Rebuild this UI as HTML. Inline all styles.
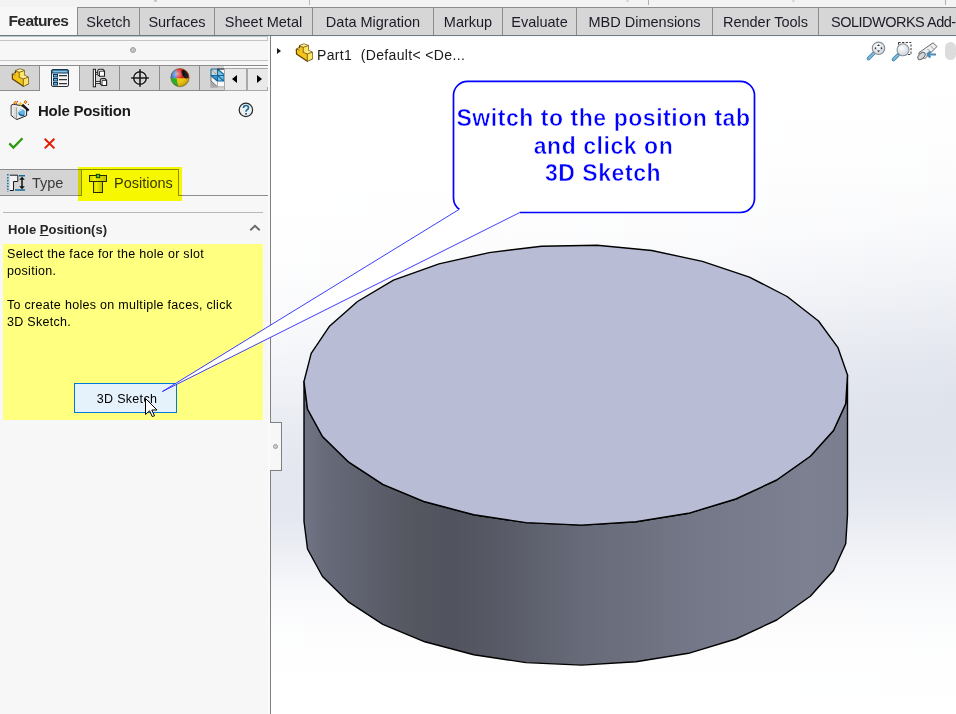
<!DOCTYPE html>
<html><head><meta charset="utf-8">
<style>
*{margin:0;padding:0;box-sizing:border-box}
html,body{width:956px;height:714px;overflow:hidden}
body{position:relative;background:#f7f7f7;font-family:"Liberation Sans",sans-serif;color:#1a1a1a}
.a{position:absolute}
.tab{position:absolute;top:7px;height:29px;background:#d6d6d6;border:1px solid #8c8c8c;border-bottom:none;font-size:14.5px;color:#1c1c28;display:flex;align-items:center;justify-content:center;padding-bottom:1px;white-space:nowrap;overflow:hidden}
.itab{position:absolute;top:65px;height:26px;background:#d4d4d4;border:1px solid #8c8c8c;border-left:none}
</style></head><body>
<!-- top strip -->
<div class="a" style="left:0;top:0;width:956px;height:7px;background:#f3f3f3"></div>
<div class="a" style="left:309px;top:0;width:1px;height:5px;background:#b8b8b8"></div>
<div class="a" style="left:648px;top:0;width:1px;height:5px;background:#b0b0b0"></div>
<div class="a" style="left:945px;top:0;width:1px;height:5px;background:#b0b0b0"></div>
<div class="a" style="left:154px;top:0;width:3px;height:2px;border-radius:0 0 2px 2px;background:#c4c4c4"></div>
<div class="a" style="left:626px;top:0;width:3px;height:2px;border-radius:0 0 2px 2px;background:#d8d8d8"></div>
<div class="a" style="left:792px;top:0;width:3px;height:2px;border-radius:0 0 2px 2px;background:#d8d8d8"></div>

<!-- command manager tabs -->
<div class="a" style="left:0;top:7px;width:77px;height:29px;background:#f7f7f7;font-weight:bold;font-size:15.5px;letter-spacing:-0.6px;color:#2a2a2a;display:flex;align-items:center;padding-left:8.5px;padding-bottom:2px">Features</div>
<div class="tab" style="left:77px;width:63px">Sketch</div>
<div class="tab" style="left:139px;width:76px">Surfaces</div>
<div class="tab" style="left:214px;width:99px">Sheet Metal</div>
<div class="tab" style="left:312px;width:122px">Data Migration</div>
<div class="tab" style="left:433px;width:70px">Markup</div>
<div class="tab" style="left:502px;width:75px">Evaluate</div>
<div class="tab" style="left:576px;width:137px">MBD Dimensions</div>
<div class="tab" style="left:712px;width:107px">Render Tools</div>
<div class="tab" style="left:818px;width:160px;justify-content:flex-start;padding-left:12px;letter-spacing:-0.5px">SOLIDWORKS Add-ins</div>
<div class="a" style="left:77px;top:35px;width:879px;height:1px;background:#6f7a80"></div>
<div class="a" style="left:0;top:35px;width:77px;height:1px;background:#6f7a80"></div>
<div class="a" style="left:0;top:36px;width:268px;height:1px;background:#b6c8cc"></div>

<!-- left panel -->
<div class="a" style="left:0;top:40px;width:268px;height:1px;background:#c4c4c4"></div><div class="a" style="left:267px;top:37px;width:1px;height:4px;background:#c4c4c4"></div><div class="a" style="left:268px;top:36px;width:2px;height:678px;background:#fafafa"></div>
<div class="a" style="left:130px;top:47px;width:6px;height:6px;border-radius:50%;background:#c4c4c4;border:1px solid #a0a0a0"></div>
<div class="a" style="left:0;top:60px;width:268px;height:1px;background:#c4c4c4"></div>

<!-- icon tabs -->
<div class="a" style="left:0;top:65px;width:268px;height:1px;background:#8c8c8c"></div>
<div class="itab" style="left:0;width:40px"></div>
<div class="itab" style="left:40px;width:40px;background:#f7f7f7;border-bottom:none"></div>
<div class="itab" style="left:80px;width:40px"></div>
<div class="itab" style="left:120px;width:40px"></div>
<div class="itab" style="left:160px;width:40px"></div>
<div class="itab" style="left:200px;width:24px;border-right:none"></div>
<div class="a" style="left:224px;top:68px;width:44px;height:1px;background:#a8a8a8"></div><div class="a" style="left:224px;top:69px;width:23px;height:22px;background:#e9e9e9;border-left:1px solid #a8a8a8;border-bottom:1px solid #a8a8a8"></div>
<div class="a" style="left:246px;top:69px;width:2px;height:22px;background:#a8a8a8"></div><div class="a" style="left:248px;top:69px;width:20px;height:22px;background:#e9e9e9;border-bottom:1px solid #a8a8a8"></div><div class="a" style="left:267px;top:87px;width:1px;height:3px;background:#a8a8a8"></div>

<!-- title -->
<div class="a" style="left:38px;top:101.5px;font-weight:bold;font-size:15px;letter-spacing:-0.25px;color:#1a1a1a">Hole Position</div>

<!-- type/positions -->
<div class="a" style="left:0;top:169px;width:82px;height:27px;background:#d4d4d4;border-top:1px solid #8c8c8c;border-right:1px solid #8c8c8c;border-bottom:1px solid #8c8c8c"></div>
<div class="a" style="left:81px;top:169px;width:98px;height:27px;background:#f7f7f7;border:1px solid #8c8c8c;border-bottom:none"></div>
<div class="a" style="left:178px;top:195px;width:90px;height:1px;background:#8c8c8c"></div>
<div class="a" style="left:32px;top:174.5px;font-size:14.5px;color:#3a3a3a">Type</div>
<div class="a" style="left:114px;top:174.5px;font-size:14.5px;color:#383838">Positions</div>

<div class="a" style="left:3px;top:212px;width:260px;height:1px;background:#b8b8b8"></div>
<div class="a" style="left:8px;top:222px;font-weight:bold;font-size:13px;color:#262626">Hole <u>P</u>osition(s)</div>

<svg class="a" style="left:248px;top:223px" width="14" height="10" viewBox="0 0 14 10"><path d="M2.3,7.3 L7,2.8 L11.7,7.3" fill="none" stroke="#686868" stroke-width="1.9"/></svg>
<!-- message box -->
<div class="a" style="left:3px;top:244px;width:260px;height:176px;background:#ffff80"></div>
<div class="a" style="left:7px;top:246px;font-size:12.5px;line-height:17px;letter-spacing:0.3px;color:#000">Select the face for the hole or slot<br>position.<br><br>To create holes on multiple faces, click<br>3D Sketch.</div>
<div class="a" style="left:74px;top:383px;width:103px;height:30px;background:#e5f1fb;border:1px solid #0078d7;font-size:12.5px;letter-spacing:0.3px;display:flex;align-items:center;justify-content:center;padding-top:2px;padding-left:3px;color:#000">3D Sketch</div>


<svg width="0" height="0" style="position:absolute">
<defs>
<symbol id="part" viewBox="0 0 22 22">
<path d="M2.3,8.2 L5.5,6.6 L5.5,4.9 L9.9,3.1 L14.2,4.6 L14.5,9.6 L18.2,11.2 L18.5,17.6 L13.3,20.3 L2.5,12.9 Z" fill="#f4c418" stroke="#5a3e00" stroke-width="1.2" stroke-linejoin="round"/>
<path d="M9.2,6.3 L14.2,4.6 L14.5,9.6 L9.2,11.4 Z M13.3,12.9 L18.2,11.2 L18.5,17.6 L13.3,20.3 Z" fill="#fce566"/>
<path d="M5.5,4.9 L9.9,3.1 L14.2,4.6 L9.2,6.3 Z M9.2,11.4 L14.5,9.6 L18.2,11.2 L13.3,12.9 Z" fill="#fdee9a"/>
<path d="M2.3,8.2 L4.3,7.3 L5.5,7.8 L5.5,9.0 Z" fill="#fdee9a"/>
<path d="M2.3,8.2 L5.5,9.0 M5.5,4.9 L9.2,6.3 L9.2,11.4 L13.3,12.9 L13.3,20.3 M9.2,6.3 L14.2,4.6 M13.3,12.9 L18.2,11.2" fill="none" stroke="#6e4e00" stroke-width="0.8"/>
</symbol>
</defs>
</svg>
<!-- icon tab icons -->
<svg class="a" style="left:10px;top:66px" width="22" height="22" viewBox="0 0 22 22"><use href="#part"/></svg>
<svg class="a" style="left:48px;top:66px" width="24" height="24" viewBox="0 0 24 24">
<rect x="3.5" y="3.5" width="17" height="17" rx="1.5" fill="#f4f4f4" stroke="#25303a" stroke-width="1"/>
<path d="M4,7 L4,5 Q4,4 5,4 L19,4 Q20,4 20,5 L20,7 Z" fill="#7cc2e6" stroke="#0b3a5e" stroke-width="1"/>
<rect x="5.5" y="8.5" width="4" height="2.5" fill="#6fb2d8" stroke="#0b3a5e" stroke-width="1"/>
<rect x="5.5" y="12.5" width="4" height="2.5" fill="#6fb2d8" stroke="#0b3a5e" stroke-width="1"/>
<rect x="5.5" y="16.5" width="4" height="2.5" fill="#6fb2d8" stroke="#0b3a5e" stroke-width="1"/>
<path d="M11,9.6 H19 M11,13.6 H19 M11,17.6 H19" stroke="#333" stroke-width="1.1"/>
</svg>
<svg class="a" style="left:88px;top:66px" width="24" height="24" viewBox="0 0 24 24">
<rect x="5.3" y="3.3" width="2.2" height="17.5" fill="#fff" stroke="#1e1e1e" stroke-width="1"/>
<rect x="7.5" y="6.4" width="3.5" height="1.8" fill="#fff" stroke="#1e1e1e" stroke-width="0.9"/>
<rect x="7.5" y="15.6" width="5" height="1.8" fill="#fff" stroke="#1e1e1e" stroke-width="0.9"/>
<path d="M9.8,4.8 Q10,3.3 11.5,3.3 L14.8,3.3 L16.5,5 L16.5,10.3 L11.5,10.3 L9.8,8.8 Z" fill="#fff" stroke="#1e1e1e" stroke-width="1.1"/>
<path d="M11.5,5.2 H16.3 M11.5,5.2 V10.2" stroke="#1e1e1e" stroke-width="0.9" fill="none"/>
<path d="M12.3,14.2 Q12.5,12.6 14,12.6 L17,12.6 L18.6,14.2 L18.6,19.5 L14,19.5 L12.3,18 Z" fill="#fff" stroke="#1e1e1e" stroke-width="1.1"/>
<path d="M14,14.4 H18.4 M14,14.4 V19.4" stroke="#1e1e1e" stroke-width="0.9" fill="none"/>
</svg>
<svg class="a" style="left:128px;top:66px" width="24" height="24" viewBox="0 0 24 24">
<circle cx="12" cy="12" r="6.3" fill="none" stroke="#fff" stroke-width="3" opacity="0.6"/>
<circle cx="12" cy="12" r="6.3" fill="none" stroke="#1a1a1a" stroke-width="1.5"/>
<path d="M12,3.2 V20.8 M3.2,12 H20.8" stroke="#1a1a1a" stroke-width="1.6"/>
</svg>
<svg class="a" style="left:168px;top:66px" width="24" height="24" viewBox="0 0 24 24">
<defs><radialGradient id="hl" cx="0.35" cy="0.3" r="0.75"><stop offset="0" stop-color="#fff" stop-opacity="0.6"/><stop offset="0.45" stop-color="#fff" stop-opacity="0"/><stop offset="1" stop-color="#000" stop-opacity="0.3"/></radialGradient><clipPath id="bc"><circle cx="12" cy="11.6" r="9.2"/></clipPath></defs>
<g clip-path="url(#bc)">
<rect x="0" y="0" width="24" height="24" fill="#f0c400"/>
<path d="M0,0 H24 V12.2 H0 Z" fill="#d81c1c"/>
<path d="M0,0 H9.5 Q8,6 8.6,12.2 H0 Z" fill="#3a78d6"/>
<path d="M0,12.2 H8.6 Q9.3,17 11,24 H0 Z" fill="#1fae22"/>
<ellipse cx="16.8" cy="8.2" rx="2.6" ry="4.8" transform="rotate(-32 16.8 8.2)" fill="#0e0e0e"/>
</g>
<circle cx="12" cy="11.6" r="9.2" fill="url(#hl)" stroke="#6a5020" stroke-width="0.5"/>
</svg>
<svg class="a" style="left:206px;top:64px" width="18" height="28" viewBox="0 0 18 28">
<rect x="4.3" y="4" width="13.7" height="19.7" fill="#dcdcdc"/>
<path d="M4.3,16 L11.5,23.7 L4.3,23.7 Z" fill="#a9a9a9"/>
<path d="M5,11.5 L11.5,17.5 L11.5,22.8 L5,17 Z" fill="#f4f4f4" stroke="#3a3a3a" stroke-width="0.7"/>
<rect x="11.5" y="17" width="6.5" height="5.8" fill="#fafafa"/>
<path d="M11.5,22.8 H18" stroke="#9a9a9a" stroke-width="0.8"/>
<rect x="5" y="5" width="6.5" height="6.5" fill="#d6d0c8"/>
<path d="M11.5,5 L18,5 L18,17 L11.5,17 Z" fill="#7cc0e0"/>
<path d="M5,11.5 L11.5,11.5 L11.5,17 Z" fill="#4a9ac4"/>
<path d="M11.5,5 L18,10.5 L18,5 Z" fill="#f6f6f6"/>
<path d="M5,5 H11.5 V17 H18 V10.5 L11.5,5 M5,5 V11.5 H18 M5,11.5 L11.5,17 M11.5,11.5 L18,17" fill="none" stroke="#0d6aa0" stroke-width="1.1"/>
<path d="M6.5,6.5 L10,10" stroke="#1a7ab0" stroke-width="0.8" stroke-dasharray="1 0.8"/>
<path d="M11.5,5 H18" stroke="#111" stroke-width="1.1"/>
</svg>
<div class="a" style="left:232px;top:75px;width:0;height:0;border-top:4px solid transparent;border-bottom:4px solid transparent;border-right:5px solid #000"></div>
<div class="a" style="left:257px;top:75px;width:0;height:0;border-top:4px solid transparent;border-bottom:4px solid transparent;border-left:5px solid #000"></div>

<!-- hole position icon -->
<svg class="a" style="left:6px;top:98px" width="28" height="24" viewBox="0 0 28 24">
<path d="M5.2,7.3 L7.2,6.2 L15,7.6 L20.6,10.4 L20.6,17.6 L10.8,21.6 L5.2,17.6 Z" fill="#ececec" stroke="#1e1e1e" stroke-width="1"/>
<path d="M5.7,7.8 L10.4,9.4 L10.4,21 L5.7,17.3 Z" fill="#dcdcdc"/>
<path d="M10.6,9.4 L10.6,21.3" stroke="#8a8a8a" stroke-width="0.8"/>
<path d="M6.8,8.6 L6.8,17" stroke="#f8f8f8" stroke-width="1"/>
<ellipse cx="15.6" cy="14.6" rx="3.2" ry="3.5" transform="rotate(25 15.6 14.6)" fill="#5fb4e2"/>
<path d="M12.6,13.5 Q12.3,17.5 16,18.2 Q18.6,18.4 19,15.5 Q17.5,17.5 15.2,16.6 Q13.2,15.8 12.6,13.5 Z" fill="#0e5c94"/>
<path d="M13.2,13.6 Q14,11.6 16.2,11.8" stroke="#fff" stroke-width="0.9" fill="none"/>
<path d="M16.2,6.6 L22.6,12.6" stroke="#141414" stroke-width="2.5"/>
<path d="M9.5,3.2 L11,4.8 L9.5,6.4 L8,4.8 Z" fill="#f7d020" stroke="#c83200" stroke-width="0.8"/>
<path d="M19.5,2.5 L21,4.1 L19.5,5.7 L18,4.1 Z" fill="#f7d020" stroke="#c83200" stroke-width="0.8"/>
<path d="M14.5,3.2 L15.4,5.2 L17,5.9 L15.4,6.6 L14.5,8 L13.6,6.6 L12,5.9 L13.6,5.2 Z" fill="#f5c020"/>
<circle cx="11.5" cy="3.4" r="0.6" fill="#c83200"/>
<circle cx="22.4" cy="6.4" r="0.6" fill="#c83200"/>
</svg>
<!-- help -->
<svg class="a" style="left:234px;top:100px" width="24" height="22" viewBox="0 0 24 22">
<circle cx="11.9" cy="9.9" r="6.7" fill="#f0f0f0" stroke="#262626" stroke-width="1.2"/>
<path d="M9.5,8 Q9.5,5.5 12,5.5 Q14.5,5.5 14.5,7.8 Q14.5,9.2 12.8,10 Q12,10.5 12,11.8" fill="none" stroke="#1a6ea0" stroke-width="1.7"/>
<rect x="11.1" y="13" width="1.8" height="1.6" fill="#0f5a8a"/>
</svg>
<!-- check / x -->
<svg class="a" style="left:4px;top:132px" width="56" height="22" viewBox="0 0 56 22">
<path d="M5.3,11.4 L9.4,15.6 L18.5,6.2" fill="none" stroke="#2d9a12" stroke-width="2.3"/>
<path d="M40.7,6.7 L50.4,16.4 M50.4,6.7 L40.7,16.4" fill="none" stroke="#e21b00" stroke-width="2"/>
</svg>
<!-- type icon -->
<svg class="a" style="left:2px;top:168px" width="28" height="28" viewBox="0 0 28 28">
<path d="M5.8,6 V24" stroke="#1a7ab0" stroke-width="1.7" stroke-dasharray="1.6 1.3"/>
<path d="M7.8,7.2 H15.8 V13.5 H11.5 V22.5 H7.8 Z" fill="#f2f2f2"/>
<path d="M7.8,7.2 H15.8 V13.5 H11.5 V22.5 H7.8" fill="none" stroke="#1a1a1a" stroke-width="1"/>
<path d="M17,7.8 H23 M13,22 H23" stroke="#156a9a" stroke-width="1.6"/>
<path d="M20,10 V20" stroke="#111" stroke-width="1.5"/>
<path d="M17.2,11.8 L20,8.8 L22.8,11.8 Z M17.2,18.3 L20,21.3 L22.8,18.3 Z" fill="#111"/>
</svg>
<!-- positions icon -->
<svg class="a" style="left:84px;top:168px" width="28" height="28" viewBox="0 0 28 28">
<defs><linearGradient id="tg" x1="0" x2="1"><stop offset="0" stop-color="#cfcfcf"/><stop offset="0.3" stop-color="#f2f2f2"/><stop offset="1" stop-color="#bdbdbd"/></linearGradient></defs>
<rect x="5.5" y="7.5" width="17" height="6" fill="url(#tg)" stroke="#2a2a2a" stroke-width="1"/>
<rect x="9.5" y="13.5" width="9" height="11" fill="url(#tg)" stroke="#2a2a2a" stroke-width="1"/>
<rect x="12.3" y="6.3" width="3.4" height="3.4" fill="#5ac81a" stroke="#063a06" stroke-width="0.9"/>
</svg>
<div class="a" style="left:78px;top:167px;width:104px;height:34px;background:#ffff00;mix-blend-mode:multiply"></div>

<!-- panel border -->
<div class="a" style="left:270px;top:36px;width:1px;height:678px;background:#808080"></div>

<!-- viewport -->
<!-- vpbg -->
<div class="a" style="left:271px;top:37px;width:16px;height:677px;background:linear-gradient(#ffffff 0px,#ffffff 168px,#fefeff 192px,#fefefe 216px,#fdfdfe 240px,#fbfbfd 264px,#f9f9fb 288px,#f6f7fa 312px,#f2f3f8 336px,#eef0f6 360px,#eaecf3 384px,#e7eaf2 408px,#e5e8f0 432px,#e4e7f0 456px,#e5e8f1 480px,#eaecf3 504px,#f1f2f7 528px,#f7f8fa 552px,#fbfbfd 576px,#fdfefe 600px,#fefeff 624px,#ffffff 648px,#ffffff 677px)"></div>
<div class="a" style="left:287px;top:37px;width:16px;height:677px;background:linear-gradient(#ffffff 0px,#ffffff 168px,#fefeff 192px,#fefefe 216px,#fcfdfe 240px,#fbfbfd 264px,#f8f9fb 288px,#f5f6fa 312px,#f2f3f8 336px,#eef0f5 360px,#eaecf3 384px,#e7e9f1 408px,#e5e7f0 432px,#e4e7f0 456px,#e5e8f1 480px,#eaecf3 504px,#f1f2f7 528px,#f7f8fa 552px,#fbfbfd 576px,#fdfefe 600px,#fefeff 624px,#ffffff 648px,#ffffff 677px)"></div>
<div class="a" style="left:303px;top:37px;width:16px;height:677px;background:linear-gradient(#ffffff 0px,#ffffff 168px,#fefeff 192px,#fdfefe 216px,#fcfdfd 240px,#fafbfc 264px,#f8f9fb 288px,#f5f6f9 312px,#f1f3f7 336px,#edeff5 360px,#e9ecf3 384px,#e6e9f1 408px,#e4e7f0 432px,#e4e7f0 456px,#e5e8f1 480px,#eaecf3 504px,#f1f2f7 528px,#f7f8fa 552px,#fbfbfd 576px,#fdfdfe 600px,#fefeff 624px,#ffffff 648px,#ffffff 677px)"></div>
<div class="a" style="left:319px;top:37px;width:16px;height:677px;background:linear-gradient(#ffffff 0px,#ffffff 168px,#fefefe 192px,#fdfdfe 216px,#fcfcfd 240px,#fafbfc 264px,#f8f9fb 288px,#f5f6f9 312px,#f1f2f7 336px,#edeff5 360px,#e9ebf3 384px,#e6e9f1 408px,#e4e7f0 432px,#e4e7f0 456px,#e5e8f1 480px,#eaedf3 504px,#f1f2f7 528px,#f7f8fa 552px,#fbfbfd 576px,#fdfdfe 600px,#fefeff 624px,#ffffff 648px,#ffffff 677px)"></div>
<div class="a" style="left:335px;top:37px;width:16px;height:677px;background:linear-gradient(#ffffff 0px,#ffffff 144px,#feffff 168px,#fefefe 192px,#fdfdfe 216px,#fcfcfd 240px,#fafbfc 264px,#f7f8fb 288px,#f4f5f9 312px,#f0f2f7 336px,#eceef5 360px,#e9ebf2 384px,#e6e8f1 408px,#e4e7f0 432px,#e4e7f0 456px,#e5e8f1 480px,#eaedf3 504px,#f1f3f7 528px,#f7f8fa 552px,#fbfbfd 576px,#fdfdfe 600px,#fefeff 624px,#ffffff 648px,#ffffff 677px)"></div>
<div class="a" style="left:351px;top:37px;width:16px;height:677px;background:linear-gradient(#ffffff 0px,#ffffff 144px,#feffff 168px,#fefefe 192px,#fdfdfe 216px,#fcfcfd 240px,#fafafc 264px,#f7f8fb 288px,#f4f5f9 312px,#f0f2f7 336px,#eceef4 360px,#e8ebf2 384px,#e5e8f1 408px,#e4e7f0 432px,#e3e7f0 456px,#e5e8f1 480px,#ebedf4 504px,#f1f3f7 528px,#f7f8fa 552px,#fbfbfd 576px,#fdfdfe 600px,#fefeff 624px,#ffffff 648px,#ffffff 677px)"></div>
<div class="a" style="left:367px;top:37px;width:16px;height:677px;background:linear-gradient(#ffffff 0px,#ffffff 144px,#fefeff 168px,#fefefe 192px,#fdfdfe 216px,#fcfcfd 240px,#fafafc 264px,#f7f8fa 288px,#f3f5f9 312px,#f0f1f6 336px,#eceef4 360px,#e8eaf2 384px,#e5e8f0 408px,#e3e7f0 432px,#e3e6ef 456px,#e5e8f1 480px,#ebedf4 504px,#f1f3f7 528px,#f7f8fa 552px,#fbfbfd 576px,#fdfdfe 600px,#fefeff 624px,#ffffff 648px,#ffffff 677px)"></div>
<div class="a" style="left:383px;top:37px;width:16px;height:677px;background:linear-gradient(#ffffff 0px,#ffffff 144px,#fefeff 168px,#fefefe 192px,#fdfdfe 216px,#fbfcfd 240px,#f9fafc 264px,#f7f7fa 288px,#f3f4f8 312px,#eff1f6 336px,#ebedf4 360px,#e8eaf2 384px,#e5e8f0 408px,#e3e6ef 432px,#e3e6ef 456px,#e5e8f1 480px,#ebedf4 504px,#f1f3f7 528px,#f7f8fa 552px,#fbfbfd 576px,#fdfdfe 600px,#fefeff 624px,#ffffff 648px,#ffffff 677px)"></div>
<div class="a" style="left:399px;top:37px;width:16px;height:677px;background:linear-gradient(#ffffff 0px,#ffffff 144px,#fefeff 168px,#fefefe 192px,#fdfdfe 216px,#fbfcfd 240px,#f9fafc 264px,#f6f7fa 288px,#f3f4f8 312px,#eff1f6 336px,#ebedf4 360px,#e7eaf2 384px,#e4e8f0 408px,#e3e6ef 432px,#e3e6ef 456px,#e6e8f1 480px,#ebedf4 504px,#f1f3f7 528px,#f7f8fa 552px,#fbfbfd 576px,#fdfdfe 600px,#fefeff 624px,#ffffff 648px,#ffffff 677px)"></div>
<div class="a" style="left:415px;top:37px;width:16px;height:677px;background:linear-gradient(#ffffff 0px,#ffffff 144px,#fefeff 168px,#fefefe 192px,#fdfdfe 216px,#fbfbfd 240px,#f9fafb 264px,#f6f7fa 288px,#f2f4f8 312px,#eef0f6 336px,#eaedf3 360px,#e7eaf1 384px,#e4e7f0 408px,#e3e6ef 432px,#e3e6ef 456px,#e6e9f1 480px,#ebedf4 504px,#f1f3f7 528px,#f7f8fa 552px,#fbfbfd 576px,#fdfdfe 600px,#fefeff 624px,#ffffff 648px,#ffffff 677px)"></div>
<div class="a" style="left:431px;top:37px;width:16px;height:677px;background:linear-gradient(#ffffff 0px,#ffffff 144px,#fefeff 168px,#fefefe 192px,#fcfdfe 216px,#fbfbfd 240px,#f9f9fb 264px,#f6f7fa 288px,#f2f3f8 312px,#eef0f5 336px,#eaecf3 360px,#e6e9f1 384px,#e4e7f0 408px,#e3e6ef 432px,#e3e6ef 456px,#e6e9f1 480px,#ebedf4 504px,#f1f3f7 528px,#f7f8fa 552px,#fbfbfd 576px,#fdfdfe 600px,#fefeff 624px,#ffffff 648px,#ffffff 677px)"></div>
<div class="a" style="left:447px;top:37px;width:16px;height:677px;background:linear-gradient(#ffffff 0px,#ffffff 144px,#fefeff 168px,#fdfefe 192px,#fcfdfd 216px,#fbfbfd 240px,#f8f9fb 264px,#f5f6f9 288px,#f2f3f7 312px,#eef0f5 336px,#eaecf3 360px,#e6e9f1 384px,#e4e7f0 408px,#e3e6ef 432px,#e3e6ef 456px,#e6e9f1 480px,#ebeef4 504px,#f2f3f7 528px,#f7f8fa 552px,#fbfbfd 576px,#fdfdfe 600px,#fefeff 624px,#ffffff 648px,#ffffff 677px)"></div>
<div class="a" style="left:463px;top:37px;width:16px;height:677px;background:linear-gradient(#ffffff 0px,#ffffff 144px,#fefefe 168px,#fdfefe 192px,#fcfcfd 216px,#fafbfc 240px,#f8f9fb 264px,#f5f6f9 288px,#f1f3f7 312px,#edeff5 336px,#e9ecf3 360px,#e6e9f1 384px,#e3e7ef 408px,#e3e6ef 432px,#e3e6ef 456px,#e6e9f1 480px,#ebeef4 504px,#f2f3f7 528px,#f7f8fa 552px,#fbfbfd 576px,#fdfdfe 600px,#fefeff 624px,#ffffff 648px,#ffffff 677px)"></div>
<div class="a" style="left:479px;top:37px;width:16px;height:677px;background:linear-gradient(#ffffff 0px,#ffffff 120px,#feffff 144px,#fefefe 168px,#fdfdfe 192px,#fcfcfd 216px,#fafbfc 240px,#f8f9fb 264px,#f5f6f9 288px,#f1f2f7 312px,#edeff5 336px,#e9ebf2 360px,#e5e8f0 384px,#e3e6ef 408px,#e2e6ef 432px,#e3e6ef 456px,#e6e9f1 480px,#eceef4 504px,#f2f3f7 528px,#f7f8fa 552px,#fbfbfd 576px,#fdfdfe 600px,#fefeff 624px,#ffffff 648px,#ffffff 677px)"></div>
<div class="a" style="left:495px;top:37px;width:16px;height:677px;background:linear-gradient(#ffffff 0px,#ffffff 120px,#feffff 144px,#fefefe 168px,#fdfdfe 192px,#fcfcfd 216px,#fafbfc 240px,#f7f8fb 264px,#f4f5f9 288px,#f0f2f7 312px,#eceef4 336px,#e8ebf2 360px,#e5e8f0 384px,#e3e6ef 408px,#e2e6ef 432px,#e3e6ef 456px,#e6e9f1 480px,#eceef4 504px,#f2f3f7 528px,#f7f8fa 552px,#fbfbfd 576px,#fdfdfe 600px,#fefeff 624px,#ffffff 648px,#ffffff 677px)"></div>
<div class="a" style="left:511px;top:37px;width:16px;height:677px;background:linear-gradient(#ffffff 0px,#ffffff 120px,#fefeff 144px,#fefefe 168px,#fdfdfe 192px,#fcfcfd 216px,#fafafc 240px,#f7f8fa 264px,#f4f5f9 288px,#f0f2f6 312px,#eceef4 336px,#e8ebf2 360px,#e5e8f0 384px,#e3e6ef 408px,#e2e6ef 432px,#e3e6ef 456px,#e6e9f1 480px,#eceef4 504px,#f2f3f8 528px,#f7f8fa 552px,#fbfbfd 576px,#fdfdfe 600px,#fefeff 624px,#ffffff 648px,#ffffff 677px)"></div>
<div class="a" style="left:527px;top:37px;width:16px;height:677px;background:linear-gradient(#ffffff 0px,#ffffff 120px,#fefeff 144px,#fefefe 168px,#fdfdfe 192px,#fbfcfd 216px,#f9fafc 240px,#f7f8fa 264px,#f3f5f8 288px,#f0f1f6 312px,#ebeef4 336px,#e8eaf2 360px,#e4e8f0 384px,#e3e6ef 408px,#e2e5ee 432px,#e3e6ef 456px,#e6e9f1 480px,#eceef4 504px,#f2f3f8 528px,#f7f8fa 552px,#fbfbfd 576px,#fdfdfe 600px,#fefeff 624px,#ffffff 648px,#ffffff 677px)"></div>
<div class="a" style="left:543px;top:37px;width:16px;height:677px;background:linear-gradient(#ffffff 0px,#ffffff 120px,#fefeff 144px,#fefefe 168px,#fdfdfe 192px,#fbfcfd 216px,#f9fafc 240px,#f6f7fa 264px,#f3f4f8 288px,#eff1f6 312px,#ebedf4 336px,#e7eaf1 360px,#e4e7f0 384px,#e2e6ef 408px,#e2e5ee 432px,#e3e6ef 456px,#e6e9f1 480px,#eceef4 504px,#f2f4f8 528px,#f7f8fa 552px,#fbfbfd 576px,#fdfdfe 600px,#fefeff 624px,#ffffff 648px,#ffffff 677px)"></div>
<div class="a" style="left:559px;top:37px;width:16px;height:677px;background:linear-gradient(#ffffff 0px,#ffffff 120px,#fefeff 144px,#fefefe 168px,#fdfdfe 192px,#fbfcfd 216px,#f9fafc 240px,#f6f7fa 264px,#f3f4f8 288px,#eff1f6 312px,#ebedf3 336px,#e7eaf1 360px,#e4e7ef 384px,#e2e6ee 408px,#e2e5ee 432px,#e3e6ef 456px,#e6e9f1 480px,#eceef4 504px,#f2f4f8 528px,#f7f8fa 552px,#fbfbfd 576px,#fdfdfe 600px,#fefefe 624px,#ffffff 648px,#ffffff 677px)"></div>
<div class="a" style="left:575px;top:37px;width:16px;height:677px;background:linear-gradient(#ffffff 0px,#ffffff 120px,#fefeff 144px,#fefefe 168px,#fcfdfe 192px,#fbfbfd 216px,#f9f9fb 240px,#f6f7fa 264px,#f2f4f8 288px,#eef0f5 312px,#eaedf3 336px,#e6e9f1 360px,#e4e7ef 384px,#e2e5ee 408px,#e2e5ee 432px,#e3e6ef 456px,#e7e9f1 480px,#eceef4 504px,#f2f4f8 528px,#f7f8fa 552px,#fbfbfd 576px,#fdfdfe 600px,#fefefe 624px,#ffffff 648px,#ffffff 677px)"></div>
<div class="a" style="left:591px;top:37px;width:16px;height:677px;background:linear-gradient(#ffffff 0px,#ffffff 120px,#fefeff 144px,#fdfefe 168px,#fcfdfd 192px,#fbfbfd 216px,#f8f9fb 240px,#f5f7fa 264px,#f2f3f7 288px,#eef0f5 312px,#eaecf3 336px,#e6e9f1 360px,#e3e7ef 384px,#e2e5ee 408px,#e2e5ee 432px,#e3e6ef 456px,#e7eaf1 480px,#eceff4 504px,#f2f4f8 528px,#f7f8fa 552px,#fbfbfd 576px,#fdfdfe 600px,#fefefe 624px,#ffffff 648px,#ffffff 677px)"></div>
<div class="a" style="left:607px;top:37px;width:16px;height:677px;background:linear-gradient(#ffffff 0px,#ffffff 120px,#fefefe 144px,#fdfefe 168px,#fcfdfd 192px,#fbfbfc 216px,#f8f9fb 240px,#f5f6f9 264px,#f2f3f7 288px,#edf0f5 312px,#e9ecf3 336px,#e6e9f0 360px,#e3e6ef 384px,#e2e5ee 408px,#e1e5ee 432px,#e3e6ef 456px,#e7eaf1 480px,#eceff4 504px,#f2f4f8 528px,#f7f8fa 552px,#fbfbfd 576px,#fdfdfe 600px,#fefefe 624px,#ffffff 648px,#ffffff 677px)"></div>
<div class="a" style="left:623px;top:37px;width:16px;height:677px;background:linear-gradient(#ffffff 0px,#ffffff 96px,#feffff 120px,#fefefe 144px,#fdfdfe 168px,#fcfcfd 192px,#fafbfc 216px,#f8f9fb 240px,#f5f6f9 264px,#f1f3f7 288px,#edeff5 312px,#e9ecf2 336px,#e5e8f0 360px,#e3e6ef 384px,#e1e5ee 408px,#e1e5ee 432px,#e3e6ef 456px,#e7eaf1 480px,#edeff4 504px,#f2f4f8 528px,#f7f8fa 552px,#fbfbfd 576px,#fdfdfe 600px,#fefefe 624px,#ffffff 648px,#ffffff 677px)"></div>
<div class="a" style="left:639px;top:37px;width:16px;height:677px;background:linear-gradient(#ffffff 0px,#ffffff 96px,#feffff 120px,#fefefe 144px,#fdfdfe 168px,#fcfcfd 192px,#fafbfc 216px,#f8f9fb 240px,#f4f6f9 264px,#f1f2f7 288px,#edeff4 312px,#e9ebf2 336px,#e5e8f0 360px,#e2e6ee 384px,#e1e5ee 408px,#e1e5ee 432px,#e3e6ef 456px,#e7eaf1 480px,#edeff4 504px,#f2f4f8 528px,#f7f8fa 552px,#fbfbfc 576px,#fdfdfe 600px,#fefefe 624px,#ffffff 648px,#ffffff 677px)"></div>
<div class="a" style="left:655px;top:37px;width:16px;height:677px;background:linear-gradient(#ffffff 0px,#ffffff 96px,#fefeff 120px,#fefefe 144px,#fdfdfe 168px,#fcfcfd 192px,#fafafc 216px,#f7f8fb 240px,#f4f5f9 264px,#f0f2f6 288px,#eceef4 312px,#e8ebf2 336px,#e5e8f0 360px,#e2e6ee 384px,#e1e5ee 408px,#e1e5ee 432px,#e3e6ef 456px,#e7eaf1 480px,#edeff4 504px,#f2f4f8 528px,#f7f8fa 552px,#fbfbfc 576px,#fdfdfe 600px,#fefefe 624px,#ffffff 648px,#ffffff 677px)"></div>
<div class="a" style="left:671px;top:37px;width:16px;height:677px;background:linear-gradient(#ffffff 0px,#ffffff 96px,#fefeff 120px,#fefefe 144px,#fdfdfe 168px,#fcfcfd 192px,#fafafc 216px,#f7f8fa 240px,#f4f5f8 264px,#f0f2f6 288px,#eceef4 312px,#e8ebf1 336px,#e4e8ef 360px,#e2e5ee 384px,#e1e5ed 408px,#e1e5ee 432px,#e3e6ef 456px,#e7eaf1 480px,#edeff4 504px,#f3f4f8 528px,#f7f8fa 552px,#fbfbfc 576px,#fdfdfe 600px,#fefefe 624px,#ffffff 648px,#ffffff 677px)"></div>
<div class="a" style="left:687px;top:37px;width:16px;height:677px;background:linear-gradient(#ffffff 0px,#ffffff 96px,#fefeff 120px,#fefefe 144px,#fdfdfe 168px,#fbfcfd 192px,#f9fafc 216px,#f7f8fa 240px,#f3f5f8 264px,#eff1f6 288px,#ebeef4 312px,#e7eaf1 336px,#e4e7ef 360px,#e2e5ee 384px,#e1e4ed 408px,#e1e4ed 432px,#e3e6ef 456px,#e7eaf1 480px,#edeff5 504px,#f3f4f8 528px,#f7f8fa 552px,#fbfbfc 576px,#fdfdfe 600px,#fefefe 624px,#ffffff 648px,#ffffff 677px)"></div>
<div class="a" style="left:703px;top:37px;width:16px;height:677px;background:linear-gradient(#ffffff 0px,#ffffff 96px,#fefeff 120px,#fefefe 144px,#fdfdfe 168px,#fbfcfd 192px,#f9fafc 216px,#f6f7fa 240px,#f3f4f8 264px,#eff1f6 288px,#ebedf3 312px,#e7eaf1 336px,#e4e7ef 360px,#e1e5ee 384px,#e1e4ed 408px,#e1e4ed 432px,#e3e6ef 456px,#e7eaf1 480px,#edeff5 504px,#f3f4f8 528px,#f7f8fa 552px,#fbfbfc 576px,#fdfdfe 600px,#fefefe 624px,#ffffff 648px,#ffffff 677px)"></div>
<div class="a" style="left:719px;top:37px;width:16px;height:677px;background:linear-gradient(#ffffff 0px,#ffffff 96px,#fefeff 120px,#fefefe 144px,#fdfdfe 168px,#fbfcfd 192px,#f9fafb 216px,#f6f7fa 240px,#f3f4f8 264px,#eff1f5 288px,#ebedf3 312px,#e7eaf1 336px,#e3e7ef 360px,#e1e5ee 384px,#e0e4ed 408px,#e1e4ed 432px,#e3e6ef 456px,#e8eaf1 480px,#edeff5 504px,#f3f4f8 528px,#f7f8fa 552px,#fbfbfc 576px,#fdfdfe 600px,#fefefe 624px,#ffffff 648px,#ffffff 677px)"></div>
<div class="a" style="left:735px;top:37px;width:16px;height:677px;background:linear-gradient(#ffffff 0px,#ffffff 96px,#fefefe 120px,#fdfefe 144px,#fcfdfd 168px,#fbfbfd 192px,#f9f9fb 216px,#f6f7fa 240px,#f2f4f8 264px,#eef0f5 288px,#eaedf3 312px,#e6e9f0 336px,#e3e6ef 360px,#e1e5ed 384px,#e0e4ed 408px,#e1e4ed 432px,#e3e6ef 456px,#e8eaf1 480px,#edeff5 504px,#f3f4f8 528px,#f7f8fa 552px,#fbfbfc 576px,#fdfdfe 600px,#fefefe 624px,#ffffff 648px,#ffffff 677px)"></div>
<div class="a" style="left:751px;top:37px;width:16px;height:677px;background:linear-gradient(#ffffff 0px,#ffffff 96px,#fefefe 120px,#fdfefe 144px,#fcfdfd 168px,#fbfbfc 192px,#f8f9fb 216px,#f5f7f9 240px,#f2f3f7 264px,#eef0f5 288px,#eaecf3 312px,#e6e9f0 336px,#e3e6ee 360px,#e1e4ed 384px,#e0e4ed 408px,#e0e4ed 432px,#e3e6ef 456px,#e8ebf1 480px,#edeff5 504px,#f3f4f8 528px,#f7f8fa 552px,#fbfbfc 576px,#fdfdfe 600px,#fefefe 624px,#ffffff 648px,#ffffff 677px)"></div>
<div class="a" style="left:767px;top:37px;width:16px;height:677px;background:linear-gradient(#ffffff 0px,#ffffff 72px,#feffff 96px,#fefefe 120px,#fdfdfe 144px,#fcfcfd 168px,#fafbfc 192px,#f8f9fb 216px,#f5f6f9 240px,#f1f3f7 264px,#edf0f5 288px,#e9ecf2 312px,#e5e9f0 336px,#e2e6ee 360px,#e1e4ed 384px,#e0e4ed 408px,#e0e4ed 432px,#e3e7ef 456px,#e8ebf1 480px,#edf0f5 504px,#f3f4f8 528px,#f7f8fa 552px,#fbfbfc 576px,#fdfdfe 600px,#fefefe 624px,#ffffff 648px,#ffffff 677px)"></div>
<div class="a" style="left:783px;top:37px;width:16px;height:677px;background:linear-gradient(#ffffff 0px,#ffffff 72px,#fefeff 96px,#fefefe 120px,#fdfdfe 144px,#fcfcfd 168px,#fafbfc 192px,#f8f9fb 216px,#f5f6f9 240px,#f1f3f7 264px,#edeff4 288px,#e9ecf2 312px,#e5e8f0 336px,#e2e6ee 360px,#e0e4ed 384px,#e0e4ed 432px,#e3e7ef 456px,#e8ebf1 480px,#edf0f5 504px,#f3f4f8 528px,#f7f8fa 552px,#fbfbfc 576px,#fdfdfe 600px,#fefefe 624px,#ffffff 648px,#ffffff 677px)"></div>
<div class="a" style="left:799px;top:37px;width:16px;height:677px;background:linear-gradient(#ffffff 0px,#ffffff 72px,#fefeff 96px,#fefefe 120px,#fdfdfe 144px,#fcfcfd 168px,#fafbfc 192px,#f8f8fb 216px,#f4f6f9 240px,#f1f2f7 264px,#edeff4 288px,#e8ebf2 312px,#e5e8f0 336px,#e2e5ee 360px,#e0e4ed 384px,#e0e4ed 432px,#e3e7ef 456px,#e8ebf1 480px,#eef0f5 504px,#f3f4f8 528px,#f7f8fa 552px,#fbfbfc 576px,#fdfdfe 600px,#fefefe 624px,#feffff 648px,#ffffff 672px,#ffffff 677px)"></div>
<div class="a" style="left:815px;top:37px;width:16px;height:677px;background:linear-gradient(#ffffff 0px,#ffffff 72px,#fefeff 96px,#fefefe 120px,#fdfdfe 144px,#fcfcfd 168px,#fafafc 192px,#f7f8fa 216px,#f4f5f9 240px,#f0f2f6 264px,#eceef4 288px,#e8ebf1 312px,#e4e8ef 336px,#e1e5ee 360px,#e0e4ed 384px,#e0e4ed 432px,#e3e7ef 456px,#e8ebf2 480px,#eef0f5 504px,#f3f4f8 528px,#f7f8fa 552px,#fbfbfc 576px,#fdfdfe 600px,#fefefe 624px,#feffff 648px,#ffffff 672px,#ffffff 677px)"></div>
<div class="a" style="left:831px;top:37px;width:16px;height:677px;background:linear-gradient(#ffffff 0px,#ffffff 72px,#fefeff 96px,#fefefe 120px,#fdfdfe 144px,#fbfcfd 168px,#fafafc 192px,#f7f8fa 216px,#f4f5f8 240px,#f0f2f6 264px,#eceef4 288px,#e8eaf1 312px,#e4e7ef 336px,#e1e5ed 360px,#e0e4ed 384px,#e0e3ec 408px,#e0e4ed 432px,#e3e7ef 456px,#e8ebf2 480px,#eef0f5 504px,#f3f4f8 528px,#f7f8fa 552px,#fbfbfc 576px,#fdfdfe 600px,#fefefe 624px,#feffff 648px,#ffffff 672px,#ffffff 677px)"></div>
<div class="a" style="left:847px;top:37px;width:16px;height:677px;background:linear-gradient(#ffffff 0px,#ffffff 72px,#fefeff 96px,#fefefe 120px,#fdfdfe 144px,#fbfcfd 168px,#f9fafc 192px,#f7f8fa 216px,#f3f5f8 240px,#eff1f6 264px,#ebeef3 288px,#e7eaf1 312px,#e4e7ef 336px,#e1e5ed 360px,#e0e3ec 384px,#dfe3ec 408px,#e0e4ed 432px,#e3e7ef 456px,#e8ebf2 480px,#eef0f5 504px,#f3f5f8 528px,#f7f8fa 552px,#fbfbfc 576px,#fdfdfe 600px,#fefefe 624px,#feffff 648px,#ffffff 672px,#ffffff 677px)"></div>
<div class="a" style="left:863px;top:37px;width:16px;height:677px;background:linear-gradient(#ffffff 0px,#ffffff 72px,#fefeff 96px,#fefefe 120px,#fdfdfe 144px,#fbfcfd 168px,#f9fafb 192px,#f6f7fa 216px,#f3f4f8 240px,#eff1f6 264px,#ebedf3 288px,#e7eaf1 312px,#e3e7ef 336px,#e1e4ed 360px,#dfe3ec 384px,#dfe3ec 408px,#e0e4ed 432px,#e4e7ef 456px,#e8ebf2 480px,#eef0f5 504px,#f3f5f8 528px,#f7f8fa 552px,#fafbfc 576px,#fdfdfe 600px,#fefefe 624px,#feffff 648px,#ffffff 672px,#ffffff 677px)"></div>
<div class="a" style="left:879px;top:37px;width:16px;height:677px;background:linear-gradient(#ffffff 0px,#ffffff 72px,#fefefe 96px,#fdfefe 120px,#fcfdfd 144px,#fbfbfd 168px,#f9fafb 192px,#f6f7fa 216px,#f3f4f8 240px,#eff1f5 264px,#eaedf3 288px,#e6e9f0 312px,#e3e6ee 336px,#e0e4ed 360px,#dfe3ec 384px,#dfe3ec 408px,#e0e4ed 432px,#e4e7ef 456px,#e9ebf2 480px,#eef0f5 504px,#f3f5f8 528px,#f7f8fa 552px,#fafbfc 576px,#fdfdfe 600px,#fefefe 624px,#fefeff 648px,#ffffff 672px,#ffffff 677px)"></div>
<div class="a" style="left:895px;top:37px;width:16px;height:677px;background:linear-gradient(#ffffff 0px,#ffffff 48px,#feffff 72px,#fefefe 96px,#fdfefe 120px,#fcfdfd 144px,#fbfbfc 168px,#f9f9fb 192px,#f6f7f9 216px,#f2f4f7 240px,#eef0f5 264px,#eaedf3 288px,#e6e9f0 312px,#e3e6ee 336px,#e0e4ed 360px,#dfe3ec 384px,#dfe3ec 408px,#e0e4ed 432px,#e4e7ef 456px,#e9ebf2 480px,#eef0f5 504px,#f3f5f8 528px,#f7f8fa 552px,#fafbfc 576px,#fdfdfe 600px,#fefefe 624px,#fefeff 648px,#ffffff 672px,#ffffff 677px)"></div>
<div class="a" style="left:911px;top:37px;width:16px;height:677px;background:linear-gradient(#ffffff 0px,#ffffff 48px,#feffff 72px,#fefefe 96px,#fdfefe 120px,#fcfdfd 144px,#fbfbfc 168px,#f8f9fb 192px,#f5f7f9 216px,#f2f3f7 240px,#eef0f5 264px,#eaecf2 288px,#e6e9f0 312px,#e2e6ee 336px,#e0e4ed 360px,#dfe3ec 384px,#dfe3ec 408px,#e0e4ed 432px,#e4e7ef 456px,#e9ebf2 480px,#eef0f5 504px,#f3f5f8 528px,#f7f8fa 552px,#fafbfc 576px,#fcfdfe 600px,#fefefe 624px,#fefeff 648px,#ffffff 672px,#ffffff 677px)"></div>
<div class="a" style="left:927px;top:37px;width:16px;height:677px;background:linear-gradient(#ffffff 0px,#ffffff 48px,#fefeff 72px,#fefefe 96px,#fdfdfe 120px,#fcfcfd 144px,#fafbfc 168px,#f8f9fb 192px,#f5f6f9 216px,#f1f3f7 240px,#edf0f5 264px,#e9ecf2 288px,#e5e8f0 312px,#e2e6ee 336px,#e0e4ec 360px,#dfe3ec 384px,#dfe3ec 408px,#e0e4ed 432px,#e4e7ef 456px,#e9ecf2 480px,#eef0f5 504px,#f3f5f8 528px,#f7f8fa 552px,#fafbfc 576px,#fcfdfd 600px,#fefefe 624px,#fefeff 648px,#ffffff 672px,#ffffff 677px)"></div>
<div class="a" style="left:943px;top:37px;width:13px;height:677px;background:linear-gradient(#ffffff 0px,#ffffff 48px,#fefeff 72px,#fefefe 96px,#fdfdfe 120px,#fcfcfd 144px,#fafbfc 168px,#f8f9fb 192px,#f5f6f9 216px,#f1f3f7 240px,#edeff4 264px,#e9ecf2 288px,#e5e8ef 312px,#e2e5ed 336px,#dfe3ec 360px,#dfe3ec 408px,#e0e4ed 432px,#e4e7ef 456px,#e9ecf2 480px,#eef0f5 504px,#f3f5f8 528px,#f7f8fa 552px,#fafbfc 576px,#fcfdfd 600px,#fefefe 624px,#fefeff 648px,#ffffff 672px,#ffffff 677px)"></div>
<!-- /vpbg -->

<!-- sash -->
<div class="a" style="left:270px;top:422px;width:12px;height:49px;background:#f7f7f7;border:1px solid #808080;border-left:none"></div>
<div class="a" style="left:272.5px;top:443.5px;width:5px;height:5px;border-radius:50%;background:#cfcfcf;border:1px solid #9a9a9a"></div>
<!-- tree -->
<div class="a" style="left:277px;top:48px;width:0;height:0;border-top:3.5px solid transparent;border-bottom:3.5px solid transparent;border-left:4px solid #1a1a1a"></div>
<svg class="a" style="left:293.5px;top:41px" width="22" height="22" viewBox="0 0 22 22"><use href="#part"/></svg>
<div class="a" style="left:317px;top:46.5px;font-size:14px;letter-spacing:0.35px;color:#1a1a1a;white-space:pre">Part1  (Default&lt; &lt;De...</div>


<svg class="a" style="left:0;top:0" width="956" height="714" viewBox="0 0 956 714">
<defs>
<linearGradient id="sideg" gradientUnits="userSpaceOnUse" x1="304" y1="0" x2="848" y2="0">
<stop offset="0" stop-color="#717586"/>
<stop offset="0.03" stop-color="#686c7b"/>
<stop offset="0.2" stop-color="#545660"/>
<stop offset="0.27" stop-color="#51535e"/>
<stop offset="0.34" stop-color="#565864"/>
<stop offset="0.51" stop-color="#676a78"/>
<stop offset="0.73" stop-color="#757888"/>
<stop offset="0.92" stop-color="#7c8091"/>
<stop offset="1" stop-color="#7a7e8f"/>
</linearGradient>
</defs>
<path d="M304.0,381.5 L304.0,521.5 L307.5,549.0 L322.5,576.5 L348.8,602.2 L382.8,624.3 L424.8,641.8 L473.8,654.7 L526.0,662.6 L581.5,665.1 L636.0,661.7 L688.5,653.3 L735.8,639.0 L776.7,620.0 L810.3,596.3 L833.5,570.5 L845.7,543.7 L847.5,515.0 L847.5,375.0 L845.7,403.7 L833.5,430.5 L810.3,456.3 L776.7,480.0 L735.8,499.0 L688.5,513.3 L636.0,521.7 L581.5,525.1 L526.0,522.6 L473.8,514.7 L424.8,501.8 L382.8,484.3 L348.8,462.2 L322.5,436.5 L307.5,409.0 Z" fill="url(#sideg)" stroke="#000" stroke-width="1.4" stroke-linejoin="round"/>
<path d="M847.5,375.0 L838.0,347.7 L818.5,321.0 L787.1,296.5 L749.4,277.1 L702.4,261.4 L651.8,250.5 L597.2,245.2 L541.5,246.2 L489.2,252.6 L439.0,263.9 L393.5,280.2 L357.5,301.5 L329.2,326.6 L311.2,353.4 L304.0,381.5 L307.5,409.0 L322.5,436.5 L348.8,462.2 L382.8,484.3 L424.8,501.8 L473.8,514.7 L526.0,522.6 L581.5,525.1 L636.0,521.7 L688.5,513.3 L735.8,499.0 L776.7,480.0 L810.3,456.3 L833.5,430.5 L845.7,403.7 Z" fill="#b8bcd4" stroke="#000" stroke-width="1.4" stroke-linejoin="round"/>
<path d="M467.5,81.4 L740.5,81.4 A14,14 0 0 1 754.5,95.4 L754.5,198.5 A14,14 0 0 1 740.5,212.5 L519.8,212.5 L162.4,391.5 L459.3,209.3 A14,14 0 0 1 453.5,198.5 L453.5,95.4 A14,14 0 0 1 467.5,81.4 Z" fill="#fff"/>
<path d="M519.8,212.5 L740.5,212.5 A14,14 0 0 0 754.5,198.5 L754.5,95.4 A14,14 0 0 0 740.5,81.4 L467.5,81.4 A14,14 0 0 0 453.5,95.4 L453.5,198.5 A14,14 0 0 0 459.3,209.3" fill="none" stroke="#0000ff" stroke-width="1.7"/>
<path d="M519.8,212.5 L162.4,391.5 L459.3,209.3" fill="none" stroke="#2828ff" stroke-width="0.9" stroke-linejoin="miter"/>
<text x="603.5" y="125.5" text-anchor="middle" font-family="Liberation Sans" font-weight="bold" font-size="23" fill="#0000ff" letter-spacing="0.55" stroke="#fff" stroke-width="0.5">Switch to the position tab</text>
<text x="603.5" y="153.5" text-anchor="middle" font-family="Liberation Sans" font-weight="bold" font-size="23" fill="#0000ff" letter-spacing="0.55" stroke="#fff" stroke-width="0.5">and click on</text>
<text x="603" y="180.5" text-anchor="middle" font-family="Liberation Sans" font-weight="bold" font-size="23" fill="#0000ff" letter-spacing="0.55" stroke="#fff" stroke-width="0.5">3D Sketch</text>
</svg>

<!-- heads-up toolbar -->
<svg class="a" style="left:864px;top:40px" width="92" height="24" viewBox="0 0 92 24">
<defs><radialGradient id="lens" cx="0.4" cy="0.35" r="0.7"><stop offset="0" stop-color="#ffffff"/><stop offset="1" stop-color="#c8d2da"/></radialGradient></defs>
<path d="M4.5,18.5 L9.5,13.5" stroke="#3d7fa8" stroke-width="3.6" stroke-linecap="round"/>
<path d="M4.5,18.5 L9.5,13.5" stroke="#7fbcdc" stroke-width="2" stroke-linecap="round"/>
<circle cx="14.5" cy="8.3" r="6.2" fill="url(#lens)" stroke="#8a9096" stroke-width="1.1"/>
<path d="M14.5,4.3 L13,6 H16 Z M14.5,12.3 L13,10.6 H16 Z M10.5,8.3 L12.2,6.8 V9.8 Z M18.5,8.3 L16.8,6.8 V9.8 Z" fill="#333"/>
<path d="M29.5,19.5 L34,15" stroke="#3d7fa8" stroke-width="3.6" stroke-linecap="round"/>
<path d="M29.5,19.5 L34,15" stroke="#7fbcdc" stroke-width="2" stroke-linecap="round"/>
<rect x="34.5" y="2.5" width="12.5" height="12" fill="none" stroke="#333" stroke-width="1" stroke-dasharray="2.2 1.4"/>
<circle cx="39" cy="9.8" r="6" fill="url(#lens)" stroke="#8a9096" stroke-width="1.1"/>
<path d="M54.5,13 L69,2.8 L73,6.5 L60.5,19 Z" fill="#eceef0" stroke="#6a6a6a" stroke-width="1" stroke-linejoin="round"/>
<ellipse cx="57.5" cy="16" rx="2.6" ry="4.4" transform="rotate(45 57.5 16)" fill="#d4d8dc" stroke="#6a6a6a" stroke-width="1"/>
<path d="M63.5,9 L67,12.5 M66.5,5.8 L69.8,9.2" stroke="#8a8a8a" stroke-width="0.8"/>
<path d="M63,14.5 H72 M63,14.5 L66.5,11.5 M63,14.5 L66.5,17.5" stroke="#4a8bb8" stroke-width="2.2" fill="none"/>
<rect x="81" y="2" width="11" height="18" rx="5.5" fill="#dcdcdc"/>
</svg>
<!-- cursor -->
<svg class="a" style="left:144px;top:397px" width="16" height="22" viewBox="0 0 16 22">
<path d="M1.5,1.5 L1.5,17.5 L5.5,13.8 L8.3,19.6 L10.5,18.7 L7.8,13 L13,13 Z" fill="#fff" stroke="#000" stroke-width="1" stroke-linejoin="round"/>
</svg>
</body></html>
